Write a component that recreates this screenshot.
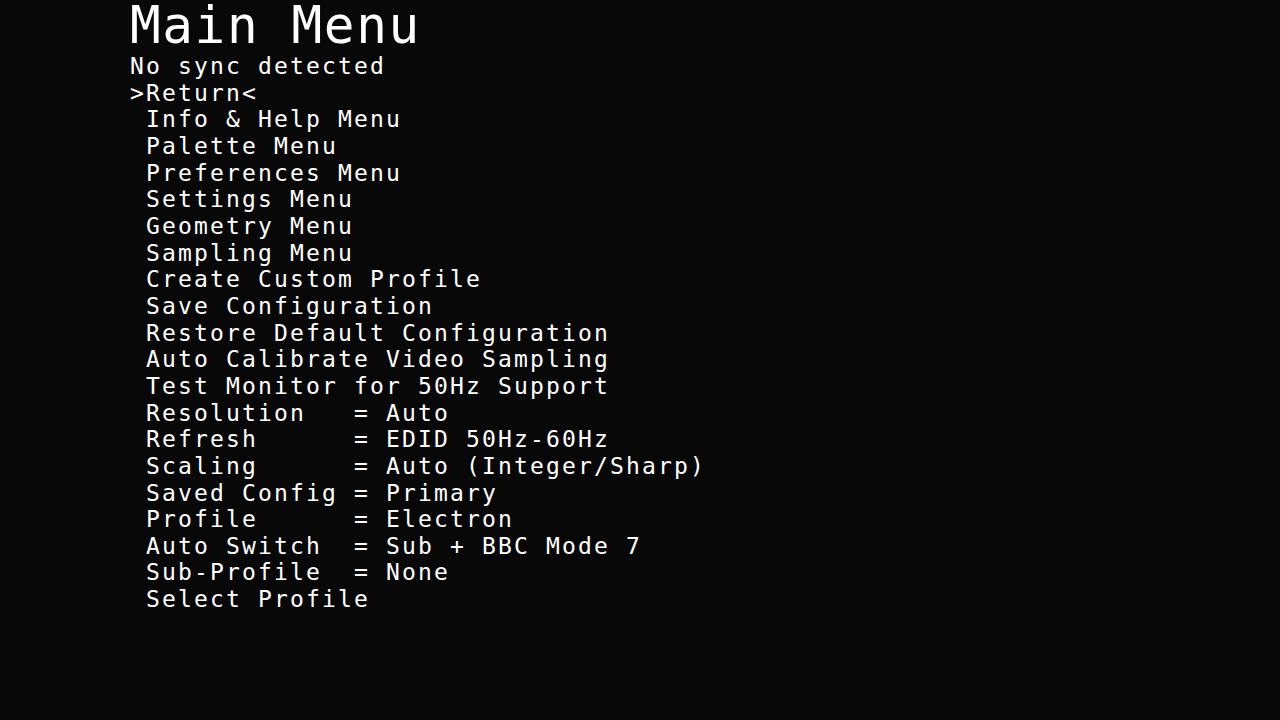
import React from "react";

const rows: string[] = [
  "No sync detected",
  ">Return<",
  " Info & Help Menu",
  " Palette Menu",
  " Preferences Menu",
  " Settings Menu",
  " Geometry Menu",
  " Sampling Menu",
  " Create Custom Profile",
  " Save Configuration",
  " Restore Default Configuration",
  " Auto Calibrate Video Sampling",
  " Test Monitor for 50Hz Support",
  " Resolution   = Auto",
  " Refresh      = EDID 50Hz-60Hz",
  " Scaling      = Auto (Integer/Sharp)",
  " Saved Config = Primary",
  " Profile      = Electron",
  " Auto Switch  = Sub + BBC Mode 7",
  " Sub-Profile  = None",
  " Select Profile",
];

export default function App() {
  return (
    <div
      className="w-[1280px] h-[720px] overflow-hidden bg-[#080808] text-white pl-[130px]"
      style={{ fontFamily: '"DejaVu Sans Mono", "Liberation Mono", monospace' }}
    >
      <div className="text-[51px] leading-[52px] tracking-[1.6px] whitespace-pre">Main Menu</div>
      <div className="mt-px text-[23px] leading-[26.65px] tracking-[2.15px] whitespace-pre">
        {rows.map((r, i) => (
          <div key={i}>{r}</div>
        ))}
      </div>
    </div>
  );
}
